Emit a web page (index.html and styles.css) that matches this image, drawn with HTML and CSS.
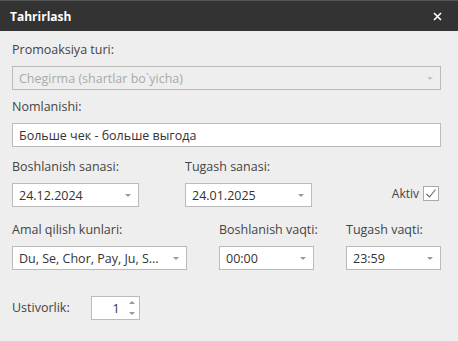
FILE: index.html
```html
<!DOCTYPE html>
<html lang="uz">
<head>
    <meta charset="UTF-8">
    <meta name="viewport" content="width=device-width, initial-scale=1.0">
    <title>Tahrirlash</title>
    <link rel="stylesheet" href="styles.css">
</head>
<body>
    <div class="dialog">
        <div class="titlebar">
            <span class="title">Tahrirlash</span>
            <svg class="close" width="9" height="9" viewBox="0 0 9 9">
                <path d="M1 1 L8 8 M8 1 L1 8" stroke="#fff" stroke-width="1.6"/>
            </svg>
        </div>
        <div class="content">
            <div class="group g1">
                <div class="label">Promoaksiya turi:</div>
                <div class="field select disabled">
                    <span>Chegirma (shartlar bo`yicha)</span>
                    <span class="arrow"></span>
                </div>
            </div>
            <div class="group g2">
                <div class="label">Nomlanishi:</div>
                <div class="field text">Больше чек - больше выгода</div>
            </div>
            <div class="row g3">
                <div class="group date">
                    <div class="label">Boshlanish sanasi:</div>
                    <div class="field select"><span>24.12.2024</span><span class="arrow"></span></div>
                </div>
                <div class="group date">
                    <div class="label">Tugash sanasi:</div>
                    <div class="field select"><span>24.01.2025</span><span class="arrow"></span></div>
                </div>
                <div class="aktiv">
                    <span>Aktiv</span>
                    <span class="checkbox">
                        <svg width="12" height="11" viewBox="0 0 12 11">
                            <path d="M1.5 6 L4.5 9 L10.5 1.5" fill="none" stroke="#666" stroke-width="1.1"/>
                        </svg>
                    </span>
                </div>
            </div>
            <div class="row g4">
                <div class="group days">
                    <div class="label">Amal qilish kunlari:</div>
                    <div class="field select"><span>Du, Se, Chor, Pay, Ju, S...</span><span class="arrow"></span></div>
                </div>
                <div class="group time">
                    <div class="label">Boshlanish vaqti:</div>
                    <div class="field select"><span>00:00</span><span class="arrow"></span></div>
                </div>
                <div class="group time">
                    <div class="label">Tugash vaqti:</div>
                    <div class="field select"><span>23:59</span><span class="arrow"></span></div>
                </div>
            </div>
            <div class="priority">
                <span class="label">Ustivorlik:</span>
                <div class="field spin">
                    <span class="num">1</span>
                    <span class="spin-btns">
                        <span class="up"></span>
                        <span class="down"></span>
                    </span>
                </div>
            </div>
        </div>
    </div>
</body>
</html>
```

FILE: styles.css
```css
body {
    margin: 0;
    padding: 0;
    font-family: 'Open Sans', 'Noto Sans', sans-serif;
    font-size: 12.5px;
    color: #444;
    background-color: #eeeeee;
}
.dialog {
    width: 458px;
    height: 341px;
    background-color: #eeeeee;
    overflow: hidden;
}
.titlebar {
    height: 30px;
    background-color: #333333;
    border-top: 1px solid #555;
    display: flex;
    align-items: center;
    justify-content: space-between;
    padding: 0 16px 0 10px;
}
.title {
    color: #fff;
    font-weight: bold;
    font-size: 12px;
}
.close {
    display: block;
}
.content {
    padding: 10px 17px 0 12px;
}
.group {
    display: flex;
    flex-direction: column;
    gap: 7px;
}
.label {
    line-height: 18px;
    white-space: nowrap;
}
.g2 {
    margin-top: 8px;
}
.g3 {
    margin-top: 11px;
}
.g4 {
    margin-top: 14px;
}
.row {
    display: flex;
    align-items: flex-start;
}
.field {
    box-sizing: border-box;
    height: 24px;
    border: 1px solid #bbbbbb;
    background-color: #fff;
    display: flex;
    align-items: center;
    padding: 0 7px 0 6px;
    color: #333;
    white-space: nowrap;
}
.select {
    justify-content: space-between;
}
.disabled {
    background-color: #eeeeee;
    color: #aaaaaa;
}
.disabled .arrow {
    border-top-color: #c4c4c4;
}
.arrow {
    width: 0;
    height: 0;
    border-left: 3.5px solid transparent;
    border-right: 3.5px solid transparent;
    border-top: 3.5px solid #999;
}
.date {
    width: 127px;
}
.date + .date {
    margin-left: 46px;
}
.aktiv {
    margin-left: auto;
    margin-top: 27px;
    display: flex;
    align-items: center;
    gap: 4px;
    font-size: 12px;
    margin-right: 2px;
}
.checkbox {
    box-sizing: border-box;
    width: 16px;
    height: 15px;
    border: 1px solid #aaa;
    background-color: #fff;
    display: flex;
    align-items: center;
    justify-content: center;
}
.checkbox svg {
    display: block;
}
.days {
    width: 175px;
}
.time {
    width: 95px;
    margin-left: 32px;
}
.priority {
    margin-top: 26px;
    display: flex;
    align-items: center;
    gap: 21px;
}
.spin {
    width: 49px;
    padding: 0 4px 0 0;
    justify-content: flex-end;
    gap: 9px;
}
.spin-btns {
    display: flex;
    flex-direction: column;
    gap: 8px;
}
.up, .down {
    width: 0;
    height: 0;
    border-left: 3.5px solid transparent;
    border-right: 3.5px solid transparent;
}
.up {
    border-bottom: 3.5px solid #999;
}
.down {
    border-top: 3.5px solid #999;
}
```
